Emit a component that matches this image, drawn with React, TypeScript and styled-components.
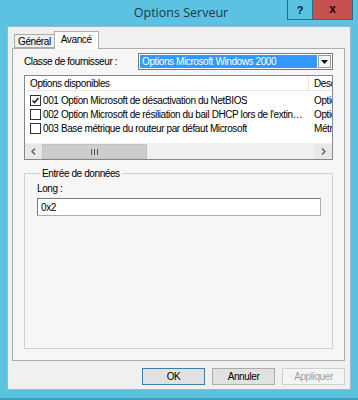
import React, { FC } from 'react'
import styled, { createGlobalStyle } from 'styled-components'

const GlobalStyle = createGlobalStyle`
	html, body {
		margin: 0;
		padding: 0;
		background: #5bc2e2;
	}
	* {
		box-sizing: border-box;
	}
`

interface Option {
	code: string
	label: string
	desc: string
	checked: boolean
}

const options: Option[] = [
	{ code: '001', label: 'Option Microsoft de désactivation du NetBIOS', desc: 'Option', checked: true },
	{ code: '002', label: "Option Microsoft de résiliation du bail DHCP lors de l'extinction", desc: 'Option', checked: false },
	{ code: '003', label: 'Base métrique du routeur par défaut Microsoft', desc: 'Métrique', checked: false },
]

const CheckIcon: FC = () => (
	<svg width="9" height="9" viewBox="0 0 9 9">
		<path d="M1.5 4.5 L3.5 6.5 L7.5 2" fill="none" stroke="#222" strokeWidth="1.6" />
	</svg>
)

export default function App() {
	return (
		<>
			<GlobalStyle />
			<Window>
				<TitleBar>
					<span />
					<Title>Options Serveur</Title>
					<Controls>
						<HelpButton>?</HelpButton>
						<CloseButton>x</CloseButton>
					</Controls>
				</TitleBar>
				<Client>
					<TabStrip>
						<Tab>Général</Tab>
						<Tab active>Avancé</Tab>
					</TabStrip>
					<Panel>
						<FieldRow>
							<FieldLabel>Classe de fournisseur :</FieldLabel>
							<Combo>
								<ComboValue>Options Microsoft Windows 2000</ComboValue>
								<ComboArrow>
									<svg width="7" height="4" viewBox="0 0 7 4">
										<path d="M0 0 H7 L3.5 4 Z" fill="#111" />
									</svg>
								</ComboArrow>
							</Combo>
						</FieldRow>
						<ListView>
							<ListHeader>
								<HeaderCell width={284}>Options disponibles</HeaderCell>
								<HeaderCell width={40}>Description</HeaderCell>
							</ListHeader>
							<ListBody>
								{options.map(opt => (
									<ListRow key={opt.code}>
										<RowMain>
											<CheckBox>{opt.checked && <CheckIcon />}</CheckBox>
											<RowText>{opt.code} {opt.label}</RowText>
										</RowMain>
										<RowDesc>{opt.desc}</RowDesc>
									</ListRow>
								))}
							</ListBody>
							<ScrollBar>
								<ScrollButton>
									<svg width="5" height="7" viewBox="0 0 5 7">
										<path d="M4 0.5 L1 3.5 L4 6.5" fill="none" stroke="#555" strokeWidth="1.2" />
									</svg>
								</ScrollButton>
								<ScrollTrack>
									<ScrollThumb>
										<Grip /><Grip /><Grip />
									</ScrollThumb>
								</ScrollTrack>
								<ScrollButton>
									<svg width="5" height="7" viewBox="0 0 5 7">
										<path d="M1 0.5 L4 3.5 L1 6.5" fill="none" stroke="#555" strokeWidth="1.2" />
									</svg>
								</ScrollButton>
							</ScrollBar>
						</ListView>
						<GroupBox>
							<Legend>Entrée de données</Legend>
							<GroupLabel>Long :</GroupLabel>
							<TextInput>0x2</TextInput>
						</GroupBox>
					</Panel>
					<ButtonRow>
						<DialogButton variant="default">OK</DialogButton>
						<DialogButton>Annuler</DialogButton>
						<DialogButton variant="disabled">Appliquer</DialogButton>
					</ButtonRow>
				</Client>
			</Window>
		</>
	)
}

const Window = styled.div`
	width: 358px;
	height: 400px;
	background: #5bc2e2;
	padding: 0 7px 8px 7px;
	display: flex;
	flex-direction: column;
	border-bottom: 2px solid #3f9fbf;
	font-family: "Liberation Sans", Arial, sans-serif;
	font-size: 10px;
	letter-spacing: -0.4px;
	color: #000;
`

const TitleBar = styled.div`
	height: 26px;
	display: grid;
	grid-template-columns: 1fr auto 1fr;
	align-items: start;
`

const Title = styled.div`
	font-family: "Open Sans", "Noto Sans", sans-serif;
	font-size: 12.5px;
	letter-spacing: 0;
	color: #22364d;
	line-height: 26px;
	padding-left: 4px;
`

const Controls = styled.div`
	display: flex;
	justify-content: flex-end;
	margin-right: -2px;
`

const HelpButton = styled.div`
	width: 25px;
	height: 20px;
	border: 1px solid #2f6b85;
	border-top: none;
	border-right: none;
	background: #5bc2e2;
	color: #0d1e2b;
	font-family: "Liberation Sans", Arial, sans-serif;
	font-weight: bold;
	font-size: 11px;
	display: flex;
	align-items: center;
	justify-content: center;
`

const CloseButton = styled.div`
	width: 41px;
	height: 20px;
	border: 1px solid #2f6b85;
	border-top: none;
	background: #c75050;
	color: #1a0a0a;
	font-family: "Liberation Sans", Arial, sans-serif;
	font-weight: bold;
	font-size: 12px;
	display: flex;
	align-items: center;
	justify-content: center;
	padding-bottom: 2px;
`

const Client = styled.div`
	flex: 1;
	background: #f0f0f0;
	border: 1px solid #9db8c6;
	padding: 4px 5px 0 4px;
	display: flex;
	flex-direction: column;
`

const TabStrip = styled.div`
	display: flex;
	align-items: flex-end;
	height: 17px;
	margin-left: 2px;
`

const Tab = styled.div<{ active?: boolean }>`
	height: ${({ active }) => (active ? '18px' : '14px')};
	padding: 0 ${({ active }) => (active ? '6px' : '3px')};
	margin-left: ${({ active }) => (active ? '-1px' : '0')};
	margin-bottom: ${({ active }) => (active ? '-1px' : '0')};
	border: 1px solid #adadad;
	border-bottom: ${({ active }) => (active ? 'none' : '1px solid #adadad')};
	background: ${({ active }) => (active ? '#ffffff' : '#f0f0f0')};
	display: flex;
	align-items: ${({ active }) => (active ? 'flex-start' : 'center')};
	padding-top: ${({ active }) => (active ? '2px' : '0')};
	position: relative;
	z-index: ${({ active }) => (active ? 1 : 0)};
`

const Panel = styled.div`
	height: 313px;
	border: 1px solid #adadad;
	background: #f6f6f6;
	padding: 4px 11px 0 11px;
	display: flex;
	flex-direction: column;
`

const FieldRow = styled.div`
	display: flex;
	align-items: center;
	height: 17px;
`

const FieldLabel = styled.div`
	width: 114px;
`

const Combo = styled.div`
	flex: 1;
	height: 17px;
	border: 1px solid #7a7a7a;
	background: #fff;
	padding: 1px;
	display: flex;
	align-items: stretch;
`

const ComboValue = styled.div`
	flex: 1;
	background: #3399ff;
	color: #fff;
	padding-left: 2px;
	display: flex;
	align-items: center;
`

const ComboArrow = styled.div`
	width: 13px;
	margin-left: 1px;
	border: 1px solid #9a9a9a;
	background: #f4f4f4;
	display: flex;
	align-items: center;
	justify-content: center;
`

const ListView = styled.div`
	margin-top: 5px;
	height: 85px;
	border: 1px solid #828790;
	background: #fff;
	display: flex;
	flex-direction: column;
	overflow: hidden;
`

const ListHeader = styled.div`
	display: flex;
	height: 15px;
	border-bottom: 1px solid #e5e5e5;
	flex-shrink: 0;
`

const HeaderCell = styled.div<{ width: number }>`
	flex: 0 0 ${({ width }) => width}px;
	padding-left: 5px;
	border-right: 1px solid #e5e5e5;
	white-space: nowrap;
	overflow: hidden;
	display: flex;
	align-items: center;
`

const ListBody = styled.div`
	flex: 1;
	padding-top: 2px;
`

const ListRow = styled.div`
	display: flex;
	height: 14px;
	align-items: center;
`

const RowMain = styled.div`
	flex: 0 0 284px;
	display: flex;
	align-items: center;
	padding-left: 5px;
	padding-right: 4px;
	overflow: hidden;
`

const CheckBox = styled.div`
	width: 11px;
	height: 11px;
	border: 1px solid #333;
	background: #fff;
	margin-right: 2px;
	flex-shrink: 0;
	display: flex;
	align-items: center;
	justify-content: center;
`

const RowText = styled.div`
	white-space: nowrap;
	overflow: hidden;
	text-overflow: ellipsis;
`

const RowDesc = styled.div`
	padding-left: 5px;
	white-space: nowrap;
	overflow: hidden;
`

const ScrollBar = styled.div`
	height: 16px;
	display: flex;
	background: #e8e8e8;
	border-top: 1px solid #f0f0f0;
	flex-shrink: 0;
`

const ScrollButton = styled.div`
	width: 17px;
	display: flex;
	align-items: center;
	justify-content: center;
	background: #e8e8e8;
`

const ScrollTrack = styled.div`
	flex: 1;
	display: flex;
	align-items: stretch;
	background: #f0f0f0;
`

const ScrollThumb = styled.div`
	width: 105px;
	background: #cdcdcd;
	border: 1px solid #c2c2c2;
	display: flex;
	align-items: center;
	justify-content: center;
	gap: 2px;
`

const Grip = styled.div`
	width: 1px;
	height: 6px;
	background: #555;
`

const GroupBox = styled.fieldset`
	margin: 8px 0 0 0;
	height: 181px;
	border: 1px solid #d0d0d0;
	padding: 4px 12px 0 12px;
	min-width: 0;
`

const Legend = styled.legend`
	padding: 0 2px;
	margin-left: 3px;
`

const GroupLabel = styled.div`
	margin-bottom: 4px;
`

const TextInput = styled.div`
	height: 18px;
	width: 284px;
	border: 1px solid #abadb3;
	border-top-color: #7a7a7a;
	border-left-color: #7a7a7a;
	background: #fff;
	padding-left: 3px;
	display: flex;
	align-items: center;
`

const ButtonRow = styled.div`
	display: flex;
	justify-content: flex-end;
	gap: 7px;
	margin-top: 7px;
`

const DialogButton = styled.div<{ variant?: 'default' | 'disabled' }>`
	width: 63px;
	height: 17px;
	display: flex;
	align-items: center;
	justify-content: center;
	border: 1px solid ${({ variant }) => variant === 'default' ? '#3c7fb1' : variant === 'disabled' ? '#cfcfcf' : '#adadad'};
	background: ${({ variant }) => variant === 'disabled' ? '#f4f4f4' : '#e1e1e1'};
	color: ${({ variant }) => variant === 'disabled' ? '#a0a0a0' : '#000'};
`
